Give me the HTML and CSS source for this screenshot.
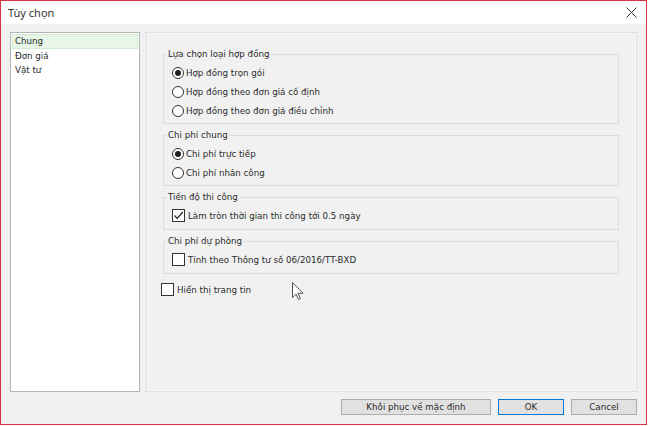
FILE: index.html
```html
<!DOCTYPE html>
<html lang="vi">
<head>
<meta charset="utf-8">
<title>Tùy chọn</title>
<link rel="stylesheet" href="styles.css">
</head>
<body>
<div class="window">
  <div class="titlebar">
    <span class="title">Tùy chọn</span>
    <svg class="close" width="11" height="11" viewBox="0 0 11 11"><path d="M0.5 0.5 L10.5 10.5 M10.5 0.5 L0.5 10.5" stroke="#333" stroke-width="1" fill="none"/></svg>
  </div>
  <div class="body">
    <div class="main">
      <ul class="nav">
        <li class="sel">Chung</li>
        <li>Đơn giá</li>
        <li>Vật tư</li>
      </ul>
      <div class="panel">
        <fieldset class="group">
          <legend>Lựa chọn loại hợp đồng</legend>
          <label class="opt"><span class="radio on"></span>Hợp đồng trọn gói</label>
          <label class="opt"><span class="radio"></span>Hợp đồng theo đơn giá cố định</label>
          <label class="opt"><span class="radio"></span>Hợp đồng theo đơn giá điều chỉnh</label>
        </fieldset>
        <fieldset class="group">
          <legend>Chi phí chung</legend>
          <label class="opt"><span class="radio on"></span>Chi phí trực tiếp</label>
          <label class="opt"><span class="radio"></span>Chi phí nhân công</label>
        </fieldset>
        <fieldset class="group">
          <legend>Tiến độ thi công</legend>
          <label class="opt chk"><span class="check"><svg width="11" height="11" viewBox="0 0 11 11"><path d="M1.5 5.5 L4.2 8.3 L9.8 2" stroke="#222" stroke-width="1.2" fill="none"/></svg></span>Làm tròn thời gian thi công tới 0.5 ngày</label>
        </fieldset>
        <fieldset class="group">
          <legend>Chi phí dự phòng</legend>
          <label class="opt chk"><span class="check"></span>Tính theo Thông tư số 06/2016/TT-BXD</label>
        </fieldset>
        <label class="opt chk standalone"><span class="check"></span>Hiển thị trang tin</label>
        <svg class="cursor" width="12" height="19" viewBox="0 0 12 19"><path d="M0.5 0.5 L0.5 15.5 L4 12 L6.5 17.5 L8.5 16.6 L6 11.3 L11 11.3 Z" fill="#fff" stroke="#555" stroke-width="1" stroke-linejoin="round"/></svg>
      </div>
    </div>
    <div class="buttons">
      <button class="btn wide">Khôi phục về mặc định</button>
      <button class="btn ok">OK</button>
      <button class="btn">Cancel</button>
    </div>
  </div>
</div>
</body>
</html>
```
FILE: styles.css
```css
* { box-sizing: border-box; }
html, body { margin: 0; padding: 0; background: #fff; }
body {
  font-family: "DejaVu Sans", Verdana, sans-serif;
  font-size: 8.7px;
  color: #2a2a2a;
}
.window {
  width: 647px;
  height: 425px;
  border: 1px solid #d4363d;
  background: #f0f0f0;
  display: flex;
  flex-direction: column;
}
.titlebar {
  height: 23px;
  flex: none;
  background: #fff;
  display: flex;
  align-items: center;
  justify-content: space-between;
  padding: 0 9px 0 7px;
}
.title {
  font-family: "Noto Sans", "Open Sans", sans-serif;
  font-size: 11px;
  color: #333;
}
.body {
  flex: 1;
  display: flex;
  flex-direction: column;
  padding: 8px 9px 9px 9px;
}
.main {
  height: 360px;
  display: flex;
  gap: 6px;
}
.nav {
  width: 130px;
  margin: 0;
  padding: 1px;
  list-style: none;
  background: #fff;
  border: 1px solid #b4b4b4;
}
.nav li {
  height: 14.5px;
  line-height: 13px;
  padding-left: 2px;
  border: 1px solid transparent;
}
.nav li.sel {
  background: #e8f6e8;
  border-color: #d2ebd2;
}
.panel {
  flex: 1;
  position: relative;
  border: 1px solid #e0e0e0;
  box-shadow: inset 0 0 0 1px #f8f8f8;
  background: #f1f1f1;
  padding: 15px 17px 0 16px;
}
.group {
  margin: 0 0 5px 0;
  padding: 0 0 3px 3px;
  border: 1px solid #dcdcdc;
  min-width: 0;
}
.group legend {
  padding: 0 1px;
  line-height: 12px;
}
.opt {
  display: flex;
  align-items: center;
  height: 19px;
  margin-left: 5px;
  white-space: nowrap;
}
.opt:first-of-type { margin-top: 3px; }
.opt.chk { height: 21px; margin-top: 2px; }
.radio {
  width: 12px;
  height: 12px;
  margin-right: 2px;
  border: 1px solid #333;
  border-radius: 50%;
  background: #fff;
  display: flex;
  align-items: center;
  justify-content: center;
  flex: none;
}
.radio.on::after {
  content: "";
  width: 6px;
  height: 6px;
  border-radius: 50%;
  background: #1e1e1e;
}
.check {
  width: 13px;
  height: 13px;
  margin-right: 3px;
  border: 1px solid #333;
  background: #fff;
  display: flex;
  align-items: center;
  justify-content: center;
  flex: none;
}
.standalone {
  margin-left: -2px;
  margin-top: 8px;
}
.cursor {
  position: absolute;
  left: 145px;
  top: 249px;
}
.buttons {
  margin-top: 7px;
  display: flex;
  justify-content: flex-end;
  gap: 7px;
}
.btn {
  height: 16px;
  width: 66px;
  padding: 0;
  font-family: inherit;
  font-size: 8.7px;
  color: #2a2a2a;
  background: #e1e1e1;
  border: 1px solid #adadad;
}
.btn.wide { width: 150px; }
.btn.ok { border-color: #0078d7; }
```
